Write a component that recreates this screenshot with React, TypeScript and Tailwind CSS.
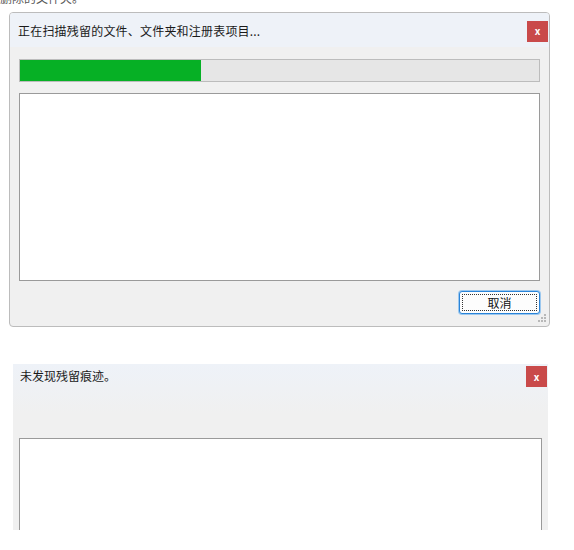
import React from 'react';

const font = { fontFamily: '"Noto Sans CJK SC", "Noto Sans", sans-serif' };

const CloseButton: React.FC = () => (
  <div className="w-[21px] h-[21px] bg-[#c94a4a] flex items-center justify-center text-white text-[10px] font-bold leading-none">
    x
  </div>
);

const Grip: React.FC = () => (
  <svg className="absolute right-[2px] bottom-[3px]" width="9" height="9" viewBox="0 0 9 9">
    {[
      [7, 1],
      [4, 4],
      [7, 4],
      [1, 7],
      [4, 7],
      [7, 7],
    ].map(([x, y]) => (
      <rect key={`${x}-${y}`} x={x - 1} y={y - 1} width="2" height="2" fill="#b8b8b8" />
    ))}
  </svg>
);

const ScanDialog: React.FC = () => (
  <div className="relative ml-[9px] mt-[7px] w-[541px] h-[315px] border border-[#bcbcbc] rounded-[4px] bg-[#f0f0f0] flex flex-col overflow-hidden">
    <div className="h-[34px] bg-[#eef2f8] flex items-center justify-between pl-[8px] pr-[1px] pt-[2px]">
      <span className="text-[12px] text-[#1a1a1a] tracking-[0.2px]">正在扫描残留的文件、文件夹和注册表项目...</span>
      <CloseButton />
    </div>
    <div className="mx-[9px] mt-[12px] h-[23px] border border-[#bcbcbc] bg-[#e6e6e6] flex">
      <div className="w-[181px] h-full bg-[#06b025]" />
    </div>
    <div className="mx-[9px] mt-[11px] h-[188px] border border-[#9a9a9a] bg-white" />
    <div className="flex justify-end pr-[9px] mt-[10px]">
      <button className="w-[81px] h-[23px] border border-[#2a84d8] rounded-[3px] bg-[#fdfdfd] p-[2px] shadow-[0_0_0_1px_#9cc8ef]">
        <div className="w-full h-full border border-dotted border-[#333] flex items-center justify-center text-[12px] text-[#111] leading-none">
          取消
        </div>
      </button>
    </div>
    <Grip />
  </div>
);

const ResultDialog: React.FC = () => (
  <div className="ml-[13px] mt-[37px] w-[535px] h-[166px] bg-gradient-to-b from-[#eef2f8] to-[#f0f0f0] to-[30%] bg-[#f0f0f0] flex flex-col">
    <div className="flex justify-between items-start pl-[7px] pr-[1px] pt-[2px]">
      <span className="text-[12px] text-[#1a1a1a] mt-[1px]">未发现残留痕迹。</span>
      <CloseButton />
    </div>
    <div className="mx-[6px] mt-[51px] flex-1 border border-b-0 border-[#9a9a9a] bg-white" />
  </div>
);

export default function App() {
  return (
    <div className="min-h-[550px] bg-white overflow-hidden" style={font}>
      <div className="h-[5px] overflow-hidden">
        <div className="-mt-[10px] text-[12px] text-[#555] leading-[15px]">删除的文件夹。</div>
      </div>
      <ScanDialog />
      <ResultDialog />
    </div>
  );
}
